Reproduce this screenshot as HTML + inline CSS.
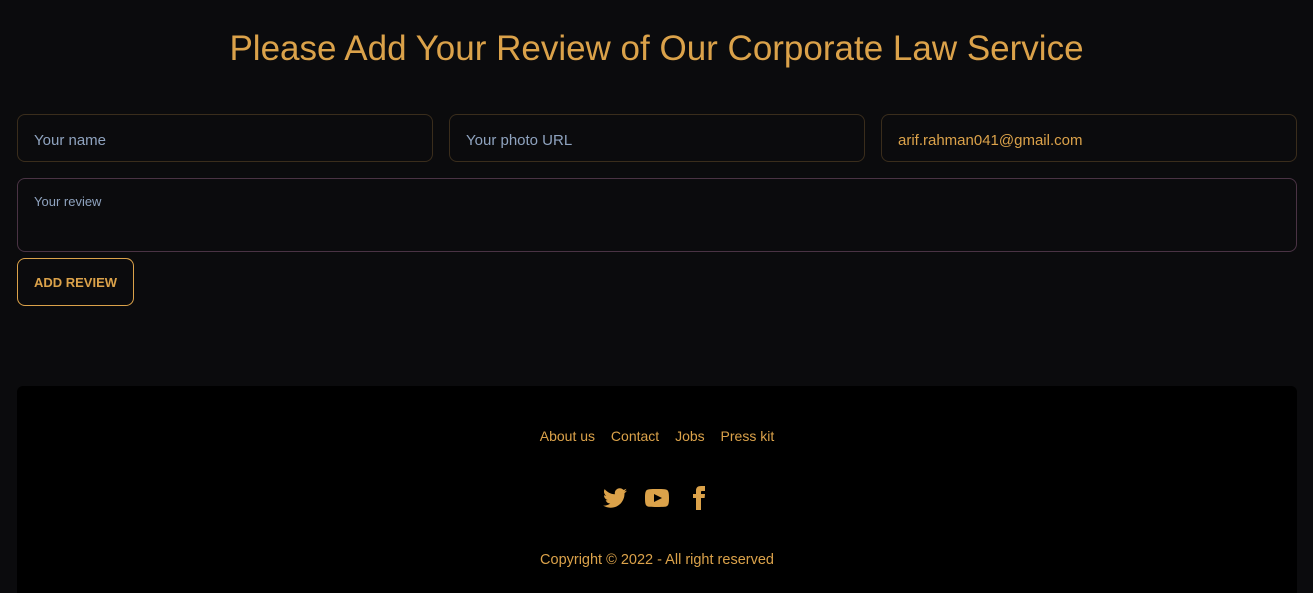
<!DOCTYPE html>
<html><head><meta charset="utf-8"><style>
*{box-sizing:border-box;margin:0;padding:0}
body{width:1313px;height:593px;background:#0b0b0d;font-family:"Liberation Sans",sans-serif;position:relative;overflow:hidden;color:#dba24a}
h1{position:absolute;top:29px;left:0;width:1313px;text-align:center;font-weight:normal;font-size:35px;color:#dba24a}
.in{position:absolute;top:114px;height:48px;width:416px;border:1px solid #3a2d1c;border-radius:8px;padding-left:16px;line-height:51px;font-size:15px;color:#8fa3bf}
.ta{position:absolute;left:17px;top:178px;width:1280px;height:74px;border:1px solid #4a3344;border-radius:8px;padding:15px 16px;font-size:13px;color:#8fa3bf}
.btn{position:absolute;left:17px;top:258px;width:117px;height:48px;border:1px solid #dba24a;border-radius:8px;text-align:center;line-height:47px;font-size:13px;font-weight:bold;color:#dba24a}
footer{position:absolute;left:17px;top:386px;width:1280px;height:207px;background:#000;border-radius:6px 6px 0 0}
.links{position:absolute;top:42px;width:100%;text-align:center;font-size:14px}
.links span{margin:0 6px}
.icons{position:absolute;top:100px;left:0;width:100%;text-align:center}
.copy{position:absolute;top:166px;width:100%;text-align:center;font-size:14.5px}
</style></head><body>
<h1>Please Add Your Review of Our Corporate Law Service</h1>
<div class="in" style="left:17px">Your name</div>
<div class="in" style="left:449px">Your photo URL</div>
<div class="in" style="left:881px;color:#dba24a">arif.rahman041@gmail.com</div>
<div class="ta">Your review</div>
<div class="btn">ADD REVIEW</div>
<footer>
<div class="links"><span>About us</span> <span>Contact</span> <span>Jobs</span> <span>Press kit</span></div>
<div class="icons">
<svg width="24" height="24" viewBox="0 0 24 24" style="margin:0 7px" fill="#dba24a"><path d="M24 4.6c-.9.4-1.8.6-2.8.8 1-.6 1.8-1.6 2.2-2.7-1 .6-2 1-3.1 1.2-.9-1-2.2-1.6-3.6-1.6-2.7 0-4.9 2.2-4.9 4.9 0 .4 0 .8.1 1.1C7.7 8.1 4.100 6.1 1.7 3.1c-.4.7-.7 1.600-.7 2.5 0 1.7.9 3.2 2.2 4.1-.8 0-1.6-.2-2.2-.6v.1c0 2.4 1.7 4.4 3.9 4.8-.4.1-.8.2-1.3.2-.3 0-.6 0-.9-.1.6 2 2.4 3.4 4.6 3.4-1.7 1.3-3.8 2.1-6.1 2.1-.4 0-.8 0-1.2-.1 2.2 1.4 4.8 2.2 7.5 2.2 9.1 0 14-7.5 14-14v-.6c1-.7 1.8-1.6 2.500-2.5z"/></svg>
<svg width="24" height="24" viewBox="0 0 24 24" style="margin:0 7px" fill="#dba24a"><path d="M19.6 3.2C16 2.9 8 2.9 4.4 3.2.5 3.5 0 5.8 0 12s.5 8.5 4.4 8.8c3.6.3 11.6.3 15.2 0C23.5 20.5 24 18.2 24 12s-.5-8.5-4.4-8.8zM9 16V8l8 4-8 4z"/></svg>
<svg width="24" height="24" viewBox="0 0 24 24" style="margin:0 7px" fill="#dba24a"><path d="M9 8H6v4h3v12h5V12h3.6l.4-4h-4V6.3c0-1 .2-1.3 1.1-1.3H18V0h-3.8C10.6 0 9 1.6 9 4.6V8z"/></svg>
</div>
<div class="copy">Copyright © 2022 - All right reserved</div>
</footer>
</body></html>
